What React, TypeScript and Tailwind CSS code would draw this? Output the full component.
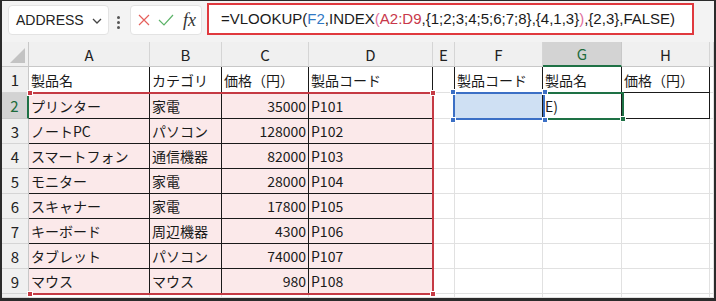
import React from "react";

const JP = { fontFamily: '"Noto Sans CJK JP", "Noto Sans", sans-serif' };

const colLetters = ["A", "B", "C", "D", "E", "F", "G", "H", ""];

type Row = string[];
const data: Row[] = [
  ["製品名", "カテゴリ", "価格（円）", "製品コード", "", "製品コード", "製品名", "価格（円）", ""],
  ["プリンター", "家電", "35000", "P101", "", "", "E)", "", ""],
  ["ノートPC", "パソコン", "128000", "P102", "", "", "", "", ""],
  ["スマートフォン", "通信機器", "82000", "P103", "", "", "", "", ""],
  ["モニター", "家電", "28000", "P104", "", "", "", "", ""],
  ["スキャナー", "家電", "17800", "P105", "", "", "", "", ""],
  ["キーボード", "周辺機器", "4300", "P106", "", "", "", "", ""],
  ["タブレット", "パソコン", "74000", "P107", "", "", "", "", ""],
  ["マウス", "マウス", "980", "P108", "", "", "", "", ""],
  ["", "", "", "", "", "", "", "", ""],
];

function Cell({ r, c, v }: { r: number; c: number; v: string }) {
  const inTable = r <= 8 && c <= 3;
  const inRight = r <= 1 && c >= 5 && c <= 7;
  const rightBlack = inTable || inRight || (r === 0 && c === 4);
  const bottomBlack = inTable || inRight;
  const pink = r >= 1 && r <= 8 && c <= 3;
  const blue = r === 1 && c === 5;
  const num = c === 2 && r >= 1 && r <= 8;
  return (
    <div
      className={`border-r border-b overflow-hidden whitespace-nowrap flex items-center text-[14px] leading-none text-[#1a1a1a] ${
        rightBlack ? "border-r-[#1a1a1a]" : "border-r-[#e1e1e1]"
      } ${bottomBlack ? "border-b-[#1a1a1a]" : "border-b-[#e1e1e1]"} ${
        pink ? "bg-[#fbe9ea]" : blue ? "bg-[#cfe0f3]" : "bg-white"
      } ${num ? "justify-end pr-[2px]" : "justify-start pl-[2px]"}`}
      style={JP}
    >
      {v}
    </div>
  );
}

function Handle({ className }: { className: string }) {
  return <div className={`absolute w-[6px] h-[6px] border border-white ${className}`} />;
}

export default function App() {
  return (
    <div className="w-[716px] h-[301px] bg-[#2b2b2b] pt-[1px] pr-[2px] pb-[3px] pl-[2px] overflow-hidden">
      <div className="w-full h-full bg-white flex flex-col overflow-hidden">
        {/* toolbar */}
        <div className="h-[41px] shrink-0 bg-[#f3f3f3] flex items-start pt-[2px] pl-[6px]">
          <div className="mt-[2px] w-[101px] h-[30px] bg-white rounded-[4px] border border-[#e3e3e3] flex items-center pl-[7px] pr-[6px] justify-between">
            <span className="text-[14px] text-[#222]" style={{ fontFamily: '"Liberation Sans", Arial, sans-serif' }}>
              ADDRESS
            </span>
            <svg width="10" height="6" viewBox="0 0 10 6" className="mt-[1px]">
              <path d="M1 1 L5 5 L9 1" fill="none" stroke="#444" strokeWidth="1.3" />
            </svg>
          </div>
          <div className="mt-[13px] ml-[8px] flex flex-col gap-[2px]">
            <div className="w-[3px] h-[3px] bg-[#555] rounded-full" />
            <div className="w-[3px] h-[3px] bg-[#555] rounded-full" />
            <div className="w-[3px] h-[3px] bg-[#555] rounded-full" />
          </div>
          <div className="mt-[2px] ml-[10px] w-[72px] h-[30px] bg-white rounded-[4px] border border-[#e3e3e3] flex items-center pl-[7px] gap-[8px]">
            <svg width="12" height="12" viewBox="0 0 12 12">
              <path d="M1 1 L11 11 M11 1 L1 11" stroke="#e5605c" strokeWidth="1.2" />
            </svg>
            <svg width="16" height="12" viewBox="0 0 16 12">
              <path d="M1 6 L6 11 L15 1" fill="none" stroke="#5cb368" strokeWidth="1.2" />
            </svg>
            <span
              className="italic text-[18px] leading-none text-[#333] ml-[1px]"
              style={{ fontFamily: '"Liberation Serif", "Times New Roman", serif' }}
            >
              fx
            </span>
          </div>
          <div
            className="ml-[5px] w-[487px] h-[32px] bg-white border-2 border-[#e0393e] flex items-center pl-[12px] text-[15px] text-[#1a1a1a] whitespace-nowrap"
            style={{ fontFamily: '"Liberation Sans", Arial, sans-serif' }}
          >
            <span>=VLOOKUP(</span>
            <span className="text-[#2f78c4]">F2</span>
            <span>,INDEX</span>
            <span className="text-[#e070a0]">(</span>
            <span className="text-[#c8374a]">A2:D9</span>
            <span>,{"{1;2;3;4;5;6;7;8}"},{"{4,1,3}"}</span>
            <span className="text-[#e070a0]">)</span>
            <span>,{"{2,3}"},FALSE)</span>
          </div>
        </div>

        {/* grid */}
        <div className="relative flex-1 grid grid-cols-[27px_121px_72px_87px_124px_22px_88px_79px_88px_1fr] grid-rows-[25px_26px_26px_25px_25px_25px_25px_25px_25px_25px_1fr]">
          {/* header row */}
          <div className="bg-[#f0f0f0] border-r border-b border-[#c8c8c8] relative">
            <div className="absolute right-[3px] bottom-[3px] w-0 h-0 border-l-[15px] border-l-transparent border-b-[15px] border-b-[#c3c3c3]" />
          </div>
          {colLetters.map((l, i) => (
            <div
              key={l + i}
              className={`flex items-center justify-center text-[15px] leading-none border-r ${
                i === 6
                  ? "bg-[#d3d3d3] text-[#1e6b3c] border-b-2 border-b-[#1e7145] border-r-[#c8c8c8]"
                  : "bg-[#f0f0f0] text-[#222] border-b border-b-[#c8c8c8] border-r-[#d5d5d5]"
              }`}
              style={JP}
            >
              {l}
            </div>
          ))}

          {data.map((row, r) => (
            <React.Fragment key={r}>
              <div
                className={`flex items-center justify-center text-[15px] leading-none border-b ${
                  r === 1
                    ? "bg-[#d3d3d3] text-[#1e6b3c] border-r-2 border-r-[#1e7145] border-b-[#c8c8c8]"
                    : "bg-[#f0f0f0] text-[#222] border-r border-r-[#c8c8c8] border-b-[#d5d5d5]"
                }`}
                style={JP}
              >
                {r < 9 ? r + 1 : ""}
              </div>
              {row.map((v, c) => (
                <Cell key={c} r={r} c={c} v={v} />
              ))}
            </React.Fragment>
          ))}

          {/* red range highlight A2:D9 */}
          <div className="absolute left-[27px] top-[50px] w-[405px] h-[203px] border-t-2 border-r-2 border-b-2 border-[#c53a44] pointer-events-none" />
          <Handle className="bg-[#c53a44] left-[25px] top-[48px]" />
          <Handle className="bg-[#c53a44] left-[428px] top-[48px]" />
          <Handle className="bg-[#c53a44] left-[25px] top-[249px]" />
          <Handle className="bg-[#c53a44] left-[428px] top-[249px]" />

          {/* green active cell G2 */}
          <div className="absolute left-[541px] top-[50px] w-[81px] h-[28px] border-2 border-[#1e7145] pointer-events-none" />
          <Handle className="bg-[#1e7145] left-[618px] top-[74px]" />

          {/* blue range F2 */}
          <div className="absolute left-[451px] top-[50px] w-[92px] h-[28px] border-2 border-[#3b6fc5] pointer-events-none" />
          <Handle className="bg-[#3b6fc5] left-[448px] top-[47px]" />
          <Handle className="bg-[#3b6fc5] left-[540px] top-[47px]" />
          <Handle className="bg-[#3b6fc5] left-[448px] top-[75px]" />
          <Handle className="bg-[#3b6fc5] left-[540px] top-[75px]" />
        </div>
      </div>
    </div>
  );
}
